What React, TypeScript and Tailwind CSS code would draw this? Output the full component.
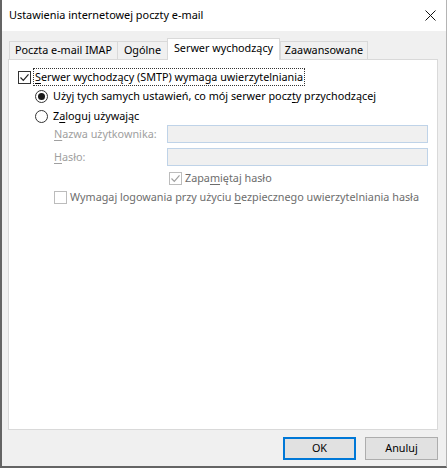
import React from "react";

const font = "font-['Noto_Sans','Liberation_Sans',sans-serif]";

function Key({ children }: { children: React.ReactNode }) {
  return <span className="underline underline-offset-[2px] decoration-1">{children}</span>;
}

function Check({ checked, disabled }: { checked?: boolean; disabled?: boolean }) {
  const edge = disabled ? "border-[#bcbcbc]" : "border-[#333333]";
  const stroke = disabled ? "#a0a0a0" : "#222222";
  return (
    <span className={`w-[13px] h-[13px] border ${edge} bg-white flex items-center justify-center shrink-0`}>
      {checked && (
        <svg width="11" height="11" viewBox="0 0 11 11">
          <path d="M1.5 5.5 L4.3 8.3 L9.5 2.3" fill="none" stroke={stroke} strokeWidth="1.2" />
        </svg>
      )}
    </span>
  );
}

function Radio({ on }: { on?: boolean }) {
  return (
    <span className="w-[13px] h-[13px] rounded-full border border-[#333333] bg-white flex items-center justify-center shrink-0">
      {on && <span className="w-[7px] h-[7px] rounded-full bg-[#1a1a1a]" />}
    </span>
  );
}

function Tab({ label, w, active }: { label: string; w: string; active?: boolean }) {
  if (active) {
    return (
      <div className={`${w} h-[22px] bg-white border border-b-0 border-[#d9d9d9] relative z-10 -mb-px flex items-center justify-center pb-[2px]`}>
        {label}
      </div>
    );
  }
  return (
    <div className={`${w} h-[18px] bg-[#f0f0f0] border border-b-0 border-[#d9d9d9] -mr-px flex items-center justify-center`}>
      {label}
    </div>
  );
}

export default function App() {
  return (
    <div className={`w-[447px] h-[468px] bg-[#f0f0f0] border-l-2 border-b-2 border-r border-l-[#646464] border-b-[#646464] border-r-[#b4b4b4] flex flex-col text-[10.8px] text-[#000] whitespace-nowrap ${font}`}>
      {/* Title bar */}
      <div className="h-[31px] bg-white flex items-center justify-between pl-[7px] pr-[10px] shrink-0">
        <span className="text-[10.9px] leading-none">Ustawienia internetowej poczty e-mail</span>
        <svg width="11" height="11" viewBox="0 0 11 11">
          <path d="M0.5 0.5 L10.5 10.5 M10.5 0.5 L0.5 10.5" stroke="#111" strokeWidth="1" />
        </svg>
      </div>

      <div className="flex-1 flex flex-col pl-[6px] pr-[8px]">
        {/* Tabs */}
        <div className="flex items-end pt-[7px] pl-[1px]">
          <Tab label="Poczta e-mail IMAP" w="w-[109px]" />
          <Tab label="Ogólne" w="w-[51px]" />
          <Tab label="Serwer wychodzący" w="w-[113px]" active />
          <Tab label="Zaawansowane" w="w-[88px]" />
        </div>

        {/* Tab panel */}
        <div className="h-[371px] bg-white border border-[#d9d9d9] flex flex-col pt-[8px] pl-[9px]">
          <div className="flex items-center h-[18px]">
            <Check checked />
            <span className="ml-[2px] px-[1px] border border-dotted border-[#333] leading-[16px]">
              <Key>S</Key>erwer wychodzący (SMTP) wymaga uwierzytelniania
            </span>
          </div>

          <div className="flex items-center h-[20px] pl-[17px]">
            <Radio on />
            <span className="ml-[5px]">
              Użyj tych samych ustawień, co mój serwer pocz<Key>t</Key>y przychodzącej
            </span>
          </div>
          <div className="flex items-center h-[20px] pl-[17px]">
            <Radio />
            <span className="ml-[5px]">
              Z<Key>a</Key>loguj używając
            </span>
          </div>

          <div className="flex flex-col pl-[36px] text-[#a0a0a0]">
            <div className="flex items-center h-[18px] -mt-px">
              <span className="w-[113px]">
                <Key>N</Key>azwa użytkownika:
              </span>
              <div className="w-[261px] h-[18px] border border-[#bfd3e8] bg-[#f0f0f0]" />
            </div>
            <div className="flex items-center h-[18px] mt-[5px]">
              <span className="w-[113px]">
                <Key>H</Key>asło:
              </span>
              <div className="w-[261px] h-[18px] border border-[#bfd3e8] bg-[#f0f0f0]" />
            </div>
            <div className="flex items-center h-[18px] mt-[3px] pl-[115px]">
              <Check checked disabled />
              <span className="ml-[3px] text-[#6d6d6d]">
                Zapa<Key>m</Key>iętaj hasło
              </span>
            </div>
            <div className="flex items-center h-[18px] mt-[1px]">
              <Check disabled />
              <span className="ml-[3px] text-[#6d6d6d]">
                Wymagaj logowania przy użyciu <Key>b</Key>ezpiecznego uwierzytelniania hasła
              </span>
            </div>
          </div>
        </div>

        {/* Dialog buttons */}
        <div className="flex justify-end gap-[9px] pt-[7px]">
          <button className={`w-[73px] h-[23px] border-2 border-[#0078d7] bg-[#e1e1e1] text-[10.8px] ${font}`}>OK</button>
          <button className={`w-[73px] h-[23px] border border-[#adadad] bg-[#e1e1e1] text-[10.8px] ${font}`}>Anuluj</button>
        </div>
      </div>
    </div>
  );
}
